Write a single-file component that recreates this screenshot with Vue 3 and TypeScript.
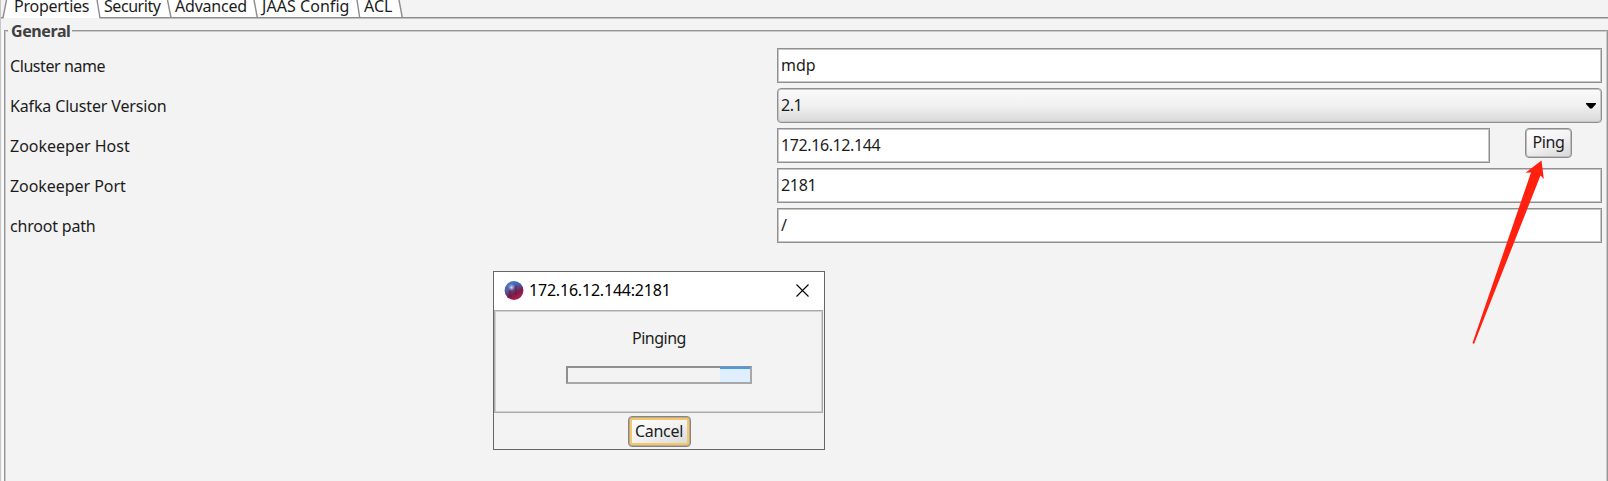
<script setup lang="ts">
interface Tab { label: string; cls: string }
const tabs: Tab[] = [
  { label: 'Properties', cls: 't-properties' },
  { label: 'Security', cls: 't-security' },
  { label: 'Advanced', cls: 't-advanced' },
  { label: 'JAAS Config', cls: 't-jaas' },
  { label: 'ACL', cls: 't-acl' },
]
interface Field { id: string; label: string; value: string; kind: 'text' | 'select' | 'host' }
const fields: Field[] = [
  { id: 'name', label: 'Cluster name', value: 'mdp', kind: 'text' },
  { id: 'version', label: 'Kafka Cluster Version', value: '2.1', kind: 'select' },
  { id: 'zk-host', label: 'Zookeeper Host', value: '172.16.12.144', kind: 'host' },
  { id: 'zk-port', label: 'Zookeeper Port', value: '2181', kind: 'text' },
  { id: 'chroot', label: 'chroot path', value: '/', kind: 'text' },
]
</script>

<template>
  <main class="window">
    <nav class="tabs">
      <svg class="tab-lines" width="1608" height="19" viewBox="0 0 1608 19">
        <path class="tab-fill" d="M97 0 L100 18 H402 L399 0 Z" />
        <path class="tab-fill" d="M6 0 L3 18 H100 L97 0 Z" />
        <path class="tab-stroke" d="M0 17.8 H3 L6.5 0 M97 0 L100 17.8 H1608 M167.5 0 L171 17.5 M254 0 L257.3 17.5 M357 0 L359.7 17.5 M399 0 L402.3 17.5" />
      </svg>
      <span v-for="t in tabs" :key="t.label" class="tab" :class="t.cls">{{ t.label }}</span>
    </nav>
    <section class="group">
      <h2 class="legend">General</h2>
      <div v-for="f in fields" :key="f.id" class="row" :class="f.id">
        <label class="label">{{ f.label }}</label>
        <div class="control" :class="f.kind">
          <span class="value">{{ f.value }}</span>
          <svg v-if="f.kind === 'select'" class="caret" width="10" height="6" viewBox="0 0 10 6"><path d="M0 0H10V1L6 5.6H4L0 1Z" /></svg>
        </div>
        <button v-if="f.kind === 'host'" class="ping">Ping</button>
      </div>
    </section>

    <section class="dialog">
      <header class="title">
        <svg class="logo" width="20" height="20" viewBox="0 0 20 20">
          <defs>
            <linearGradient id="orb" x1="0.2" y1="0" x2="0.75" y2="1">
              <stop offset="0" stop-color="#3f86d8" />
              <stop offset="0.38" stop-color="#4c5aa5" />
              <stop offset="0.65" stop-color="#7d1c49" />
              <stop offset="1" stop-color="#b5204a" />
            </linearGradient>
            <radialGradient id="glow"><stop offset="0" stop-color="#f0e8f4" stop-opacity=".9" /><stop offset="1" stop-color="#c8a8c8" stop-opacity="0" /></radialGradient>
          </defs>
          <circle cx="10" cy="9.5" r="9.4" fill="url(#orb)" />
          <path d="M6 7V16M7 10L12 6V14" stroke="#54203f" stroke-width="2" fill="none" opacity=".55" />
          <circle cx="7.5" cy="6.5" r="4" fill="url(#glow)" />
        </svg>
        <span class="title-text">172.16.12.144:2181</span>
        <svg class="close" width="13" height="13" viewBox="0 0 13 13"><path d="M.5 .5L12.5 12.5M12.5 .5L.5 12.5" /></svg>
      </header>
      <div class="body">
        <p class="message">Pinging</p>
        <div class="progress"><div class="chunk"></div></div>
      </div>
      <footer class="footer"><button class="cancel">Cancel</button></footer>
    </section>

    <svg class="arrow" width="80" height="190" viewBox="1465 158 80 190">
      <path d="M1541.5 160.5 L1525.5 172.8 L1531 172.5 L1472.5 343 L1474 344 L1540.5 175.5 L1543.8 179 Z" />
    </svg>
  </main>
</template>

<style>
body { margin: 0; background: #f3f3f3; }
</style>

<style scoped>
* { box-sizing: border-box; }
.window { position: relative; width: 1608px; height: 481px; overflow: hidden; background: #f3f3f3; border-left: 1px solid #c8c8c8; font: 16px/20px "Noto Sans", "Open Sans", sans-serif; color: #1c1c1c; }
.tabs { position: relative; display: flex; height: 29px; margin-left: -1px; }
.tab-lines { position: absolute; left: 0; top: 0; }
.tab-fill { fill: #fff; }
.tab-stroke { fill: none; stroke: #8c8c8c; stroke-width: 1.4; }
.tab { position: relative; flex: none; height: 13px; line-height: 12px; white-space: nowrap; }
.t-properties { width: 90px; margin-left: 14px; letter-spacing: -.25px; }
.t-security { width: 71px; letter-spacing: -.45px; }
.t-advanced { width: 87px; letter-spacing: -.2px; }
.t-jaas { width: 101px; letter-spacing: .05px; }
.t-acl { margin-left: 1px; }
.group { position: relative; width: 1604px; height: 460px; margin: 1px 0 0 3px; padding: 17px 4px 0 5px; border: 1px solid #969696; box-shadow: inset 0 0 0 1px #cacaca, -2px 0 0 #fafafa; }
.legend { position: absolute; left: 3px; top: -10px; margin: 0; padding: 0 2px 0 3px; background: #f3f3f3; font-size: 16px; line-height: 20px; font-weight: 700; letter-spacing: -.4px; color: #404040; }
.row { display: flex; height: 35px; margin-bottom: 5px; }
.label { flex: none; width: 767px; padding-top: 8px; }
.name .label { letter-spacing: -.42px; }
.version .label { letter-spacing: -.15px; }
.zk-port .label { letter-spacing: -.05px; }
.chroot .label { letter-spacing: -.2px; }
.zk-host .value { letter-spacing: -.4px; }
.zk-port .value { letter-spacing: -.3px; }
.control { position: relative; flex: none; width: 825px; height: 35px; padding: 6px 3px 0; background: #fff; border: 1px solid #909090; box-shadow: inset 0 0 0 1px #c6c6c6; }
.value { display: block; }
.version .value { letter-spacing: -.5px; }
.host { width: 713px; }
.select { border-radius: 4px; background: linear-gradient(#fafafa, #f1f1f1 50%, #d8d8d8); }
.caret { position: absolute; right: 5px; top: 14px; fill: #000; }
button { font: inherit; color: inherit; }
.ping { width: 47px; height: 30px; margin-left: 35px; padding: 0 0 2px; border: 1px solid #8c8c8c; border-radius: 4px; background: linear-gradient(160deg, #fff, #f2f2f2 50%, #d6d6d6); box-shadow: inset 0 0 0 1px #bdbdbd; letter-spacing: -.35px; }
.dialog { position: absolute; left: 492px; top: 271px; width: 332px; height: 179px; border: 1px solid #666; background: #f3f3f3; }
.title { display: flex; align-items: center; height: 38px; padding: 0 15px 1px 10px; background: #fff; }
.title-text { margin-left: 5px; margin-top: -1px; letter-spacing: -.2px; color: #000; }
.close { margin-left: auto; fill: none; stroke: #000; stroke-width: 1.1; }
.body { display: flex; flex-direction: column; align-items: center; width: 329px; height: 103px; border: 1px solid #aaa; box-shadow: inset 0 0 0 1px #d0d0d0; padding: 1px; }
.message { margin: 16px 0 0 1px; letter-spacing: -.5px; }
.progress { width: 186px; height: 18px; margin: 18px 0 0 1px; padding-left: 152px; border: 2px solid #8f8f8f; border-right-color: #a8a8a8; border-bottom-color: #a8a8a8; }
.chunk { width: 30px; height: 15px; margin-top: -1px; border-top: 2px solid #439df5; background: #dfefff; }
.footer { display: flex; justify-content: center; padding-top: 3px; }
.cancel { width: 63px; height: 31px; padding: 0 0 1px; border: 1px solid #858585; border-radius: 4px; background: linear-gradient(160deg, #fff, #f2f2f2 50%, #d6d6d6); box-shadow: inset 0 0 0 1px #b9ab8c, inset 0 0 0 3px #f5c66c; letter-spacing: -.3px; }
.arrow { position: absolute; left: 1464px; top: 158px; fill: #ff2010; }
</style>
